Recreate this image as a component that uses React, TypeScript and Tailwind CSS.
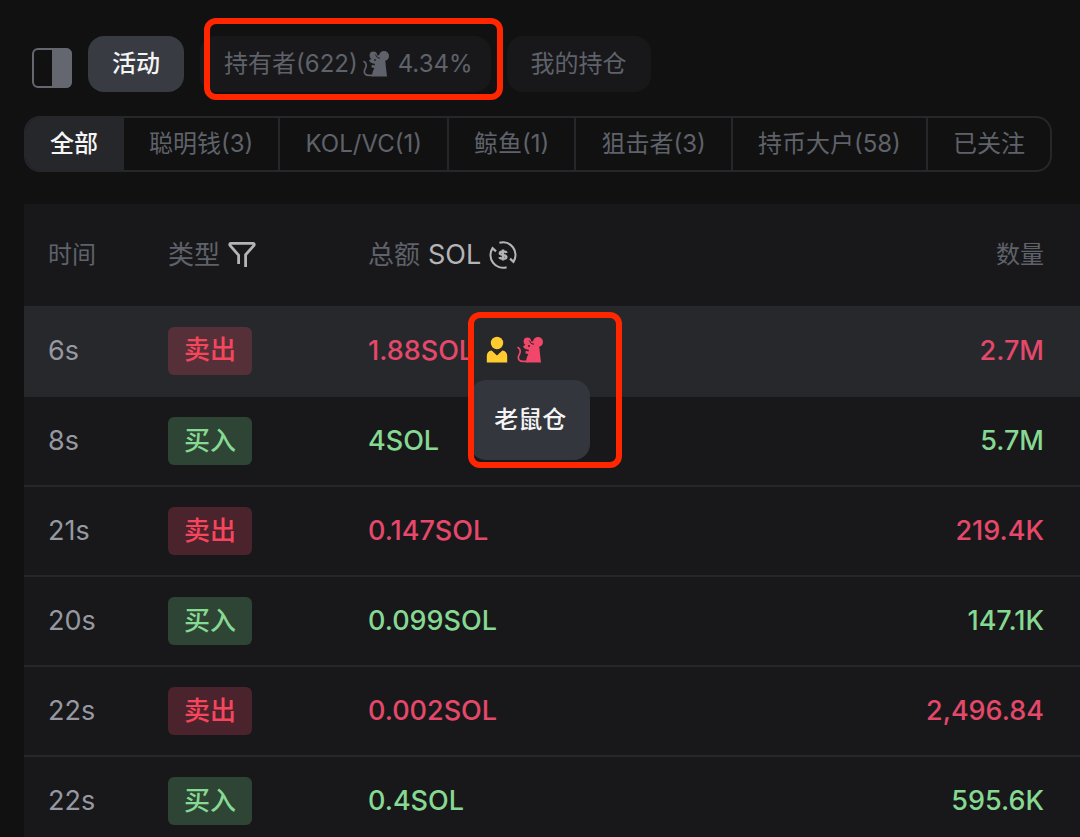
import { ReactNode } from "react";
import clsx from "clsx";

type Trade = {
  time: string;
  side: "buy" | "sell";
  total: string;
  amount: string;
  active?: boolean;
};

const filters = ["全部", "聪明钱(3)", "KOL/VC(1)", "鲸鱼(1)", "狙击者(3)", "持币大户(58)", "已关注"];

const trades: Trade[] = [
  { time: "6s", side: "sell", total: "1.88SOL", amount: "2.7M", active: true },
  { time: "8s", side: "buy", total: "4SOL", amount: "5.7M" },
  { time: "21s", side: "sell", total: "0.147SOL", amount: "219.4K" },
  { time: "20s", side: "buy", total: "0.099SOL", amount: "147.1K" },
  { time: "22s", side: "sell", total: "0.002SOL", amount: "2,496.84" },
  { time: "22s", side: "buy", total: "0.4SOL", amount: "595.6K" },
];

function RatIcon({ className }: { className?: string }) {
  return (
    <svg viewBox="0 0 28 28" className={className} aria-hidden="true">
      <path
        d="M11 25.4H7C3.6 25.4 2 23.6 2.4 20.8C2.8 18.4 4.6 17.4 4.2 15C4 13.4 3.2 12.2 2 11.6"
        fill="none"
        stroke="currentColor"
        strokeWidth="1.7"
        strokeLinecap="round"
      />
      <circle cx="11.4" cy="5.4" r="3.8" fill="currentColor" />
      <circle cx="22" cy="6" r="5" fill="currentColor" />
      <path
        d="M7 10.4C8.8 9 11.6 7.4 14 5.6C17 4.4 21.4 6 22.8 9.4C23.8 12 23.6 15 24 18L25 26.6H10C10 23 11 20.4 12.4 18.2L9.4 17.2L9.8 14.8L12.6 15.4L12.8 13.8C10.6 13.6 8 12.6 7 10.4Z"
        fill="currentColor"
      />
      <path d="M13.4 4.6L15.4 7.6L18 8.2" fill="none" stroke="#1f2023" strokeWidth="1" />
      <circle cx="13" cy="10" r="0.9" fill="#1f2023" />
    </svg>
  );
}

function PersonIcon({ className }: { className?: string }) {
  return (
    <svg viewBox="0 0 22 28" className={className} aria-hidden="true" fill="currentColor">
      <circle cx="11" cy="7" r="6.2" />
      <path d="M5.6 14.4L11 19.6L16.4 14.4C19.4 14.8 21.2 16.8 21.2 20V26.6H0.8V20C0.8 16.8 2.6 14.8 5.6 14.4Z" />
    </svg>
  );
}

function PanelIcon() {
  return (
    <svg viewBox="0 0 40 40" className="size-10" aria-hidden="true">
      <rect x="1" y="1" width="38" height="38" rx="5" fill="none" stroke="#64676f" strokeWidth="2" />
      <path d="M20 0H34A6 6 0 0 1 40 6V34A6 6 0 0 1 34 40H20Z" fill="#64676f" />
    </svg>
  );
}

function FilterIcon() {
  return (
    <svg viewBox="0 0 28 28" className="size-7" aria-hidden="true">
      <path
        d="M10.6 23V14.2L2 4.4C1.5 3.4 1.8 2.4 3 2.4H25C26.2 2.4 26.5 3.4 26 4.4L17.6 13.8V26"
        fill="none"
        stroke="#b4b4b6"
        strokeWidth="2.8"
        strokeLinejoin="round"
      />
    </svg>
  );
}

function SwapIcon() {
  return (
    <svg viewBox="0 0 28 28" className="size-7" aria-hidden="true" fill="none" stroke="#b4b4b6" strokeWidth="2.2">
      <path d="M10.4 1.8A12.6 12.6 0 0 1 24.4 20.8L21 17.6" />
      <path d="M17.6 26.2A12.6 12.6 0 0 1 3.6 7.2L7 10.4" />
      <path
        d="M17.6 11.8C17 10.2 10.8 9.6 10.8 12.2C10.8 14.8 17.4 13.2 17.4 16C17.4 18.4 11 18.2 10.4 16.2M14 8.6V19.4"
        strokeWidth="2.4"
      />
    </svg>
  );
}

function Tab({ active, className, children }: { active?: boolean; className?: string; children: ReactNode }) {
  return (
    <button
      type="button"
      className={clsx(
        "flex h-14 items-center rounded-2xl pl-6 whitespace-nowrap",
        active ? "bg-[#393b43] font-medium text-[#f4f4f5]" : "bg-[#18181a] text-[#5f626a]",
        className ?? "pr-6"
      )}
    >
      {children}
    </button>
  );
}

function TradeRow({ trade }: { trade: Trade }) {
  const sell = trade.side === "sell";
  return (
    <tr className={clsx("h-[90px] border-b-2 border-[#26272b]", trade.active && "bg-[#26282c]")}>
      <td className="pl-6 text-[#9699a1]">{trade.time}</td>
      <td>
        <span
          className={clsx(
            "inline-flex h-12 items-center rounded-md px-4 align-middle text-[26px] font-medium",
            sell ? "text-[#f6465d]" : "text-[#86d992]",
            sell ? (trade.active ? "bg-[#563038]" : "bg-[#4b232c]") : "bg-[#2e4434]"
          )}
        >
          {sell ? "卖出" : "买入"}
        </span>
      </td>
      <td className={clsx("font-medium", sell ? "text-[#e5486a]" : "text-[#86d992]")}>
        <div className="flex items-center gap-3">
          {trade.total}
          {trade.active && (
            <span className="relative flex items-center gap-2">
              <PersonIcon className="h-7 w-[22px] text-[#ffcb2e]" />
              <RatIcon className="size-7 text-[#f0476a]" />
              <span
                role="tooltip"
                className="absolute top-11 -left-4 flex h-20 items-center rounded-2xl bg-[#34363d] px-6 text-2xl font-medium whitespace-nowrap text-[#f4f4f5]"
              >
                老鼠仓
              </span>
              <span className="pointer-events-none absolute -top-6 -left-[18px] h-[156px] w-[154px] rounded-xl border-6 border-[#ff2600]" />
            </span>
          )}
        </div>
      </td>
      <td className={clsx("pr-9 text-right font-medium", sell ? "text-[#e5486a]" : "text-[#86d992]")}>
        {trade.amount}
      </td>
    </tr>
  );
}

export default function App() {
  return (
    <div className="h-screen overflow-hidden bg-[#111111] pt-9 font-[Inter,'Noto_Sans_CJK_SC',sans-serif] text-2xl">
      <div className="flex items-center gap-4 pl-8">
        <button type="button" aria-label="切换面板" className="mt-2">
          <PanelIcon />
        </button>
        <Tab active>活动</Tab>
        <div className="relative">
          <Tab className="pr-[18px]">
            持有者(622)
            <RatIcon className="mr-2 ml-1 size-7" />
            4.34%
          </Tab>
          <span className="pointer-events-none absolute -top-[18px] -right-3 -bottom-2 left-1 rounded-xl border-6 border-[#ff2600]" />
        </div>
        <Tab>我的持仓</Tab>
      </div>

      <div className="mt-6 mr-7 ml-6 flex h-14 overflow-hidden rounded-2xl border-2 border-[#26272b]">
        {filters.map((label, i) => (
          <button
            key={label}
            type="button"
            className={clsx(
              "border-[#26272b] whitespace-nowrap",
              i < filters.length - 1 && "border-r-2",
              i === 0 ? "bg-[#26272b] px-6 font-medium text-[#f4f4f5]" : "flex-auto text-[#5f626a]"
            )}
          >
            {label}
          </button>
        ))}
      </div>

      <div className="mt-8 ml-6 bg-[#18181a]">
        <table className="w-full table-fixed border-collapse text-[27px]">
          <colgroup>
            <col className="w-36" />
            <col className="w-50" />
            <col />
            <col className="w-75" />
          </colgroup>
          <thead>
            <tr className="h-[102px] text-left text-2xl text-[#5f626a]">
              <th className="pl-6 font-normal">时间</th>
              <th className="text-[26px] font-normal">
                <div className="flex items-center gap-2">
                  类型
                  <button type="button" aria-label="筛选类型">
                    <FilterIcon />
                  </button>
                </div>
              </th>
              <th className="text-[26px] font-normal">
                <div className="flex items-center gap-2">
                  总额
                  <button type="button" className="flex items-center gap-2 text-[27px] text-[#b4b4b6]">
                    SOL
                    <SwapIcon />
                  </button>
                </div>
              </th>
              <th className="pr-9 text-right font-normal">数量</th>
            </tr>
          </thead>
          <tbody>
            {trades.map((trade, i) => (
              <TradeRow key={i} trade={trade} />
            ))}
          </tbody>
        </table>
      </div>
    </div>
  );
}
